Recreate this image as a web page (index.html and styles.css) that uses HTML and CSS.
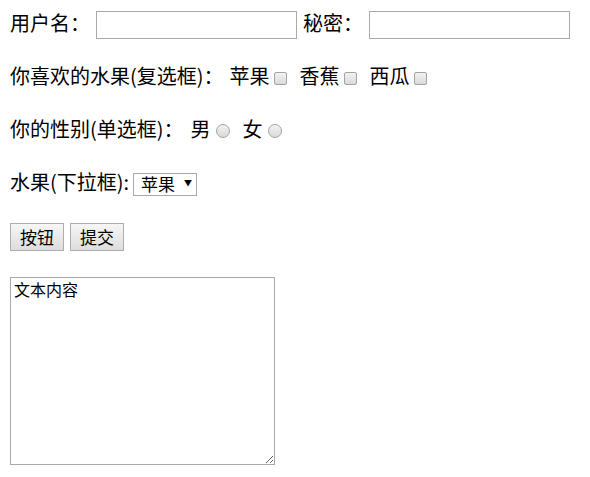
FILE: index.html
```html
<!DOCTYPE html>
<html lang="zh-CN">
<head>
    <meta charset="UTF-8">
    <title>表单</title>
    <link rel="stylesheet" href="styles.css">
</head>
<body>
    <form class="form">
        <div class="row">
            <label class="label user">用户名：</label>
            <input type="text" class="text-input">
            <label class="label pass">秘密：</label>
            <input type="password" class="text-input">
        </div>

        <div class="row">
            <span class="label ask-fruit">你喜欢的水果(复选框)：</span>
            <label class="opt"><span class="label">苹果</span><input type="checkbox" class="check"></label>
            <label class="opt"><span class="label">香蕉</span><input type="checkbox" class="check"></label>
            <label class="opt"><span class="label">西瓜</span><input type="checkbox" class="check"></label>
        </div>

        <div class="row">
            <span class="label ask-sex">你的性别(单选框)：</span>
            <label class="opt"><span class="label">男</span><input type="radio" name="sex" class="radio"></label>
            <label class="opt"><span class="label">女</span><input type="radio" name="sex" class="radio"></label>
        </div>

        <div class="row">
            <span class="label">水果(下拉框):</span>
            <div class="select"><span>苹果</span><span class="arrow">&#9660;</span></div>
        </div>

        <div class="row buttons">
            <button type="button" class="btn">按钮</button>
            <button type="submit" class="btn">提交</button>
        </div>

        <textarea class="area">文本内容</textarea>
    </form>
</body>
</html>
```

FILE: styles.css
```css
body {
    margin: 0;
    padding: 11px 10px;
    font-family: "Noto Sans CJK SC", "Liberation Sans", sans-serif;
    font-size: 20px;
    color: #000;
    background: #fff;
}

.row {
    display: flex;
    align-items: center;
    height: 28px;
    margin-bottom: 25px;
    line-height: 1;
}

/* text sits a little above the centre line, like the original */
.label {
    white-space: nowrap;
    padding-bottom: 4px;
}

.user { margin-right: 6px; }
.pass { margin: 0 6px; }
.ask-fruit { margin-right: 6px; }
.ask-sex { margin-right: 7px; }

.text-input {
    width: 201px;
    height: 28px;
    box-sizing: border-box;
    margin: 0;
    border: 1px solid #a9a9a9;
    font-size: 16px;
    outline: none;
}

/* checkbox and radio options */
.opt {
    display: flex;
    align-items: center;
    margin-right: 13px;
}

.check, .radio {
    appearance: none;
    -webkit-appearance: none;
    margin: 0 0 0 4px;
    border: 1px solid #a3a3a3;
    background: linear-gradient(#f2f2f2, #dadada);
    box-sizing: border-box;
}

.check {
    width: 13px;
    height: 13px;
    border-radius: 2px;
}

.radio {
    width: 14px;
    height: 14px;
    border-radius: 50%;
    margin-left: 5px;
}

.select {
    display: flex;
    align-items: center;
    width: 64px;
    height: 23px;
    box-sizing: border-box;
    margin-left: 4px;
    padding: 0 0 2px 7px;
    border: 1px solid #a9a9a9;
    font-size: 17px;
}

.arrow {
    font-size: 8px;
    margin-left: 9px;
}

.buttons {
    gap: 6px;
}

.btn {
    height: 28px;
    padding: 0 9px 2px;
    border: 1px solid #adadad;
    background: linear-gradient(#f6f6f6, #dddddd);
    font-family: inherit;
    font-size: 17px;
    line-height: 1;
    color: #000;
}

.area {
    display: block;
    width: 265px;
    height: 188px;
    box-sizing: border-box;
    margin: 26px 0 0;
    padding: 3px;
    border: 1px solid #a9a9a9;
    font-family: "Noto Sans CJK SC", monospace;
    font-size: 16px;
    line-height: 1.1;
    resize: both;
}
```
